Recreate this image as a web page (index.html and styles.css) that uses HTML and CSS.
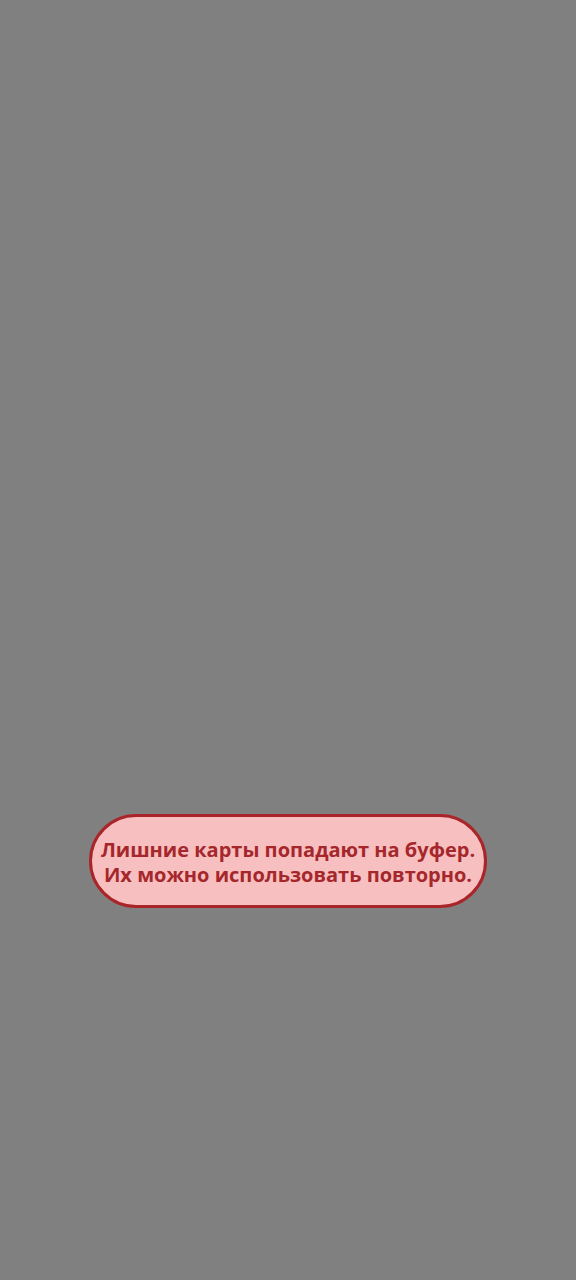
FILE: index.html
```html
<!DOCTYPE html>
<html lang="ru">
<head>
<meta charset="utf-8">
<title>Toast</title>
<link rel="stylesheet" href="styles.css">
</head>
<body>
<div class="screen">
  <div class="toast">Лишние карты попадают на буфер.<br>Их можно использовать повторно.</div>
</div>
</body>
</html>
```
FILE: styles.css
```css
html, body {
  margin: 0;
  padding: 0;
}
body {
  background: #808080;
}
.screen {
  width: 576px;
  height: 1280px;
  display: flex;
  flex-direction: column;
  align-items: center;
  padding-top: 814px;
  box-sizing: border-box;
}
.toast {
  width: 398px;
  height: 94px;
  box-sizing: border-box;
  padding-top: 2px;
  border: 3px solid #a9252a;
  border-radius: 47px;
  background: #f7bfbf;
  color: #a5272b;
  font-family: "Open Sans", "DejaVu Sans", sans-serif;
  font-weight: 700;
  font-size: 20px;
  line-height: 25px;
  text-align: center;
  white-space: nowrap;
  display: flex;
  align-items: center;
  justify-content: center;
}
```
